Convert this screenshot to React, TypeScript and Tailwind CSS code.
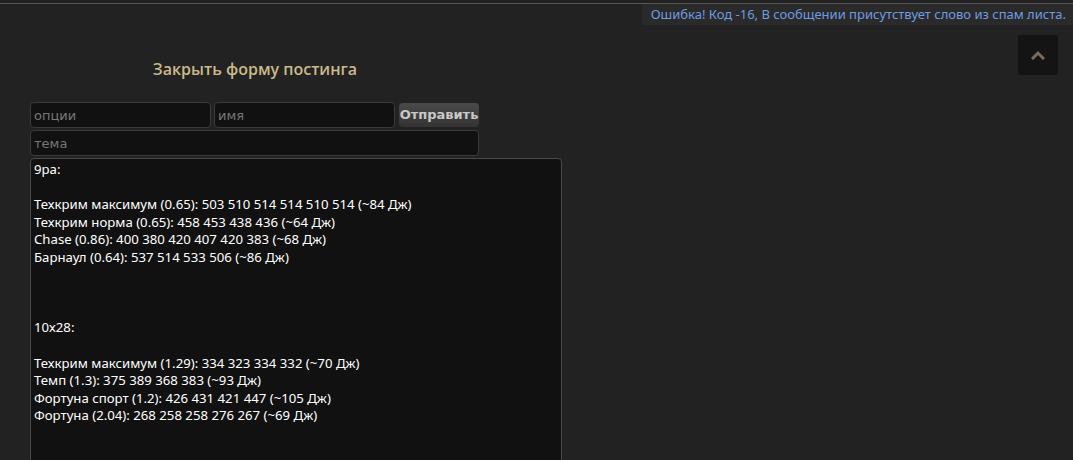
import React from "react";

const postText = `9ра:

Техкрим максимум (0.65): 503 510 514 514 510 514 (~84 Дж)
Техкрим норма (0.65): 458 453 438 436 (~64 Дж)
Chase (0.86): 400 380 420 407 420 383 (~68 Дж)
Барнаул (0.64): 537 514 533 506 (~86 Дж)



10х28:

Техкрим максимум (1.29): 334 323 334 332 (~70 Дж)
Темп (1.3): 375 389 368 383 (~93 Дж)
Фортуна спорт (1.2): 426 431 421 447 (~105 Дж)
Фортуна (2.04): 268 258 258 276 267 (~69 Дж)`;

export default function App() {
  return (
    <div className="relative h-[460px] w-full overflow-hidden bg-[#222222] font-['Noto_Sans',sans-serif]">
      {/* top rule */}
      <div className="h-[3px] bg-[#222222]" />
      <div className="h-px bg-[#555555]" />

      {/* error notice */}
      <div className="flex justify-end">
        <div className="h-[21px] bg-[#2a2a2a] pl-[9px] pr-[7px] text-[13px] leading-[20px] text-[#6f9be0]">
          Ошибка! Код -16, В сообщении присутствует слово из спам листа.
        </div>
      </div>

      {/* scroll to top */}
      <div className="absolute right-[15px] top-[35px] flex h-[40px] w-[40px] items-center justify-center rounded-[2px] bg-[#141414]">
        <svg width="14" height="10" viewBox="0 0 14 10">
          <path d="M2 8 L7 3 L12 8" fill="none" stroke="#7c6a5b" strokeWidth="3" strokeLinecap="square" />
        </svg>
      </div>

      <div className="w-[532px] pl-[30px]">
        <div className="mt-[33px] w-[450px] text-center text-[16px] font-semibold leading-[22px] text-[#cbb98a] font-['Open_Sans',sans-serif]">
          Закрыть форму постинга
        </div>

        <div className="mt-[22px] flex gap-[3px]">
          <input
            placeholder="опции"
            className="h-[26px] w-[181px] rounded-[4px] border border-[#3a3a3a] bg-[#111111] px-[3px] text-[13px] text-[#bbbbbb] outline-none placeholder:text-[#777777] font-['DejaVu_Sans',sans-serif]"
          />
          <input
            placeholder="имя"
            className="h-[26px] w-[181px] rounded-[4px] border border-[#3a3a3a] bg-[#111111] px-[3px] text-[13px] text-[#bbbbbb] outline-none placeholder:text-[#777777] font-['DejaVu_Sans',sans-serif]"
          />
          <button className="ml-[1px] mt-[1px] h-[24px] w-[80px] rounded-[4px] bg-gradient-to-b from-[#4a4a4a] to-[#333333] text-[13px] font-bold text-[#c8c8c8] font-['DejaVu_Sans',sans-serif]">
            Отправить
          </button>
        </div>

        <input
          placeholder="тема"
          className="mt-[2px] block h-[26px] w-[449px] rounded-[4px] border border-[#3a3a3a] bg-[#111111] px-[3px] text-[13px] text-[#bbbbbb] outline-none placeholder:text-[#777777] font-['DejaVu_Sans',sans-serif]"
        />

        <textarea
          readOnly
          defaultValue={postText}
          className="mt-[2px] block h-[330px] w-[532px] resize-none overflow-hidden rounded-[4px] border border-[#4a4a42] bg-[#111111] px-[3px] pt-[2px] text-[13.2px] leading-[17.6px] text-white outline-none font-['Noto_Sans',sans-serif]"
        />
      </div>
    </div>
  );
}
